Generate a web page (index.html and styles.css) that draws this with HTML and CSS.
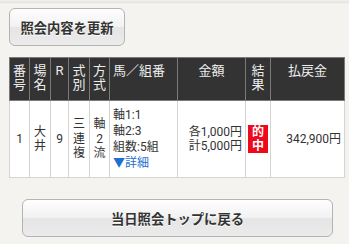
FILE: index.html
```html
<!DOCTYPE html>
<html lang="ja">
<head>
  <meta charset="UTF-8" />
  <meta name="viewport" content="width=device-width, initial-scale=1.0"/>
  <title>照会結果</title>
  <link rel="stylesheet" href="styles.css">
</head>
<body>
  <div class="topline"></div>
  <div class="page">
    <button class="btn btn-refresh">照会内容を更新</button>

    <table class="result">
      <colgroup>
        <col style="width:20px"><col style="width:21px"><col style="width:18px">
        <col style="width:21px"><col style="width:20px"><col style="width:68px">
        <col style="width:68px"><col style="width:25px"><col>
      </colgroup>
      <thead>
        <tr>
          <th class="narrow">番号</th>
          <th class="narrow">場名</th>
          <th class="narrow">R</th>
          <th class="narrow">式別</th>
          <th class="narrow">方式</th>
          <th class="left">馬／組番</th>
          <th>金額</th>
          <th class="narrow">結果</th>
          <th>払戻金</th>
        </tr>
      </thead>
      <tbody>
        <tr>
          <td class="narrow">1</td>
          <td class="narrow">大井</td>
          <td class="narrow">9</td>
          <td class="narrow">三連複</td>
          <td class="narrow">軸2流</td>
          <td class="combo">軸1:1<br>軸2:3<br>組数:5組<br><a href="#" class="detail">▼詳細</a></td>
          <td class="amount">各1,000円<br>計5,000円</td>
          <td class="mark"><span class="hit">的中</span></td>
          <td class="amount">342,900円</td>
        </tr>
      </tbody>
    </table>

    <button class="btn btn-back">当日照会トップに戻る</button>
  </div>
</body>
</html>
```

FILE: styles.css
```css
body {
  margin: 0;
  background-color: #f4f3ef;
  font-family: "Roboto", "Noto Sans CJK JP", sans-serif;
  color: #333;
}

.topline {
  height: 4px;
  background: linear-gradient(#f4f3ef, #e4e3df 60%, #f7f6f2);
}

.page {
  padding: 4px 0 0 9px;
}

.btn {
  display: block;
  border: 1px solid #b4b4b4;
  border-radius: 6px;
  background: linear-gradient(#fefefe, #f2f2f2 48%, #e5e5e5 52%, #ebebeb);
  font-family: "Noto Sans CJK JP", sans-serif;
  font-size: 13.3px;
  font-weight: bold;
  color: #333;
  text-shadow: 0 1px 0 #fff;
  padding: 0;
}

.btn-refresh {
  width: 116px;
  height: 38px;
}

.btn-back {
  width: 311px;
  height: 38px;
  margin: 21px 0 0 13px;
}

.result {
  margin-top: 11px;
  width: 336px;
  table-layout: fixed;
  border-collapse: collapse;
  background-color: #fff;
  font-size: 12px;
}

.result th {
  background-color: #333;
  color: #eee;
  font-weight: normal;
  font-size: 13px;
  line-height: 14px;
  height: 43px;
  padding: 6px 0 0;
  vertical-align: top;
  border: 1px solid #7a7a7a;
  text-align: center;
  box-sizing: border-box;
}

.result th.left {
  text-align: left;
  padding-left: 3px;
}

.result td {
  border: 1px solid #d4d4d4;
  height: 77px;
  padding: 0;
  vertical-align: middle;
  text-align: center;
  line-height: 14.5px;
  box-sizing: border-box;
}

.result th.narrow,
.result td.narrow {
  word-break: break-all;
  padding-left: 3px;
  padding-right: 3px;
}

.result td.combo {
  text-align: left;
  padding-left: 3px;
  line-height: 16px;
}

.result td.amount {
  text-align: right;
  padding-right: 3px;
}

.detail {
  color: #1e6fd2;
  text-decoration: none;
}

.hit {
  display: inline-block;
  width: 20px;
  background-color: #ee0a1a;
  color: #fff;
  font-weight: bold;
  font-size: 12px;
  line-height: 14px;
}
```
